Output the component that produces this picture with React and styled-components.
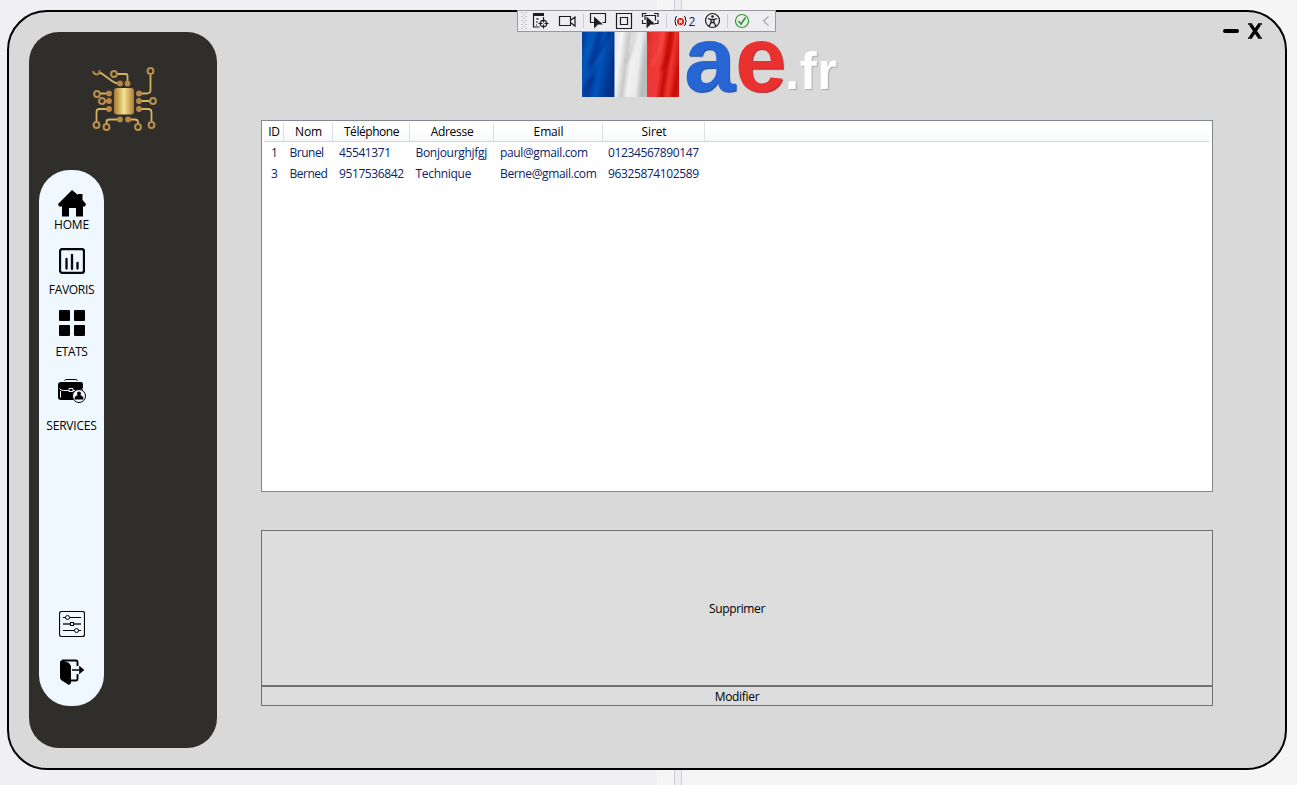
import React from "react";
import styled, { createGlobalStyle } from "styled-components";

const Global = createGlobalStyle`
  * { box-sizing: border-box; }
  body { margin: 0; overflow: hidden; font-family: "Open Sans", "Noto Sans", sans-serif; font-size: 12px; color: #000; }
  svg { display: block; flex: none; }
`;

const Desktop = styled.div`
  height: 785px;
  padding: 10px 10px 15px 7px;
  background: linear-gradient(90deg, #f0f0f4 657px, #f5f5f5 657px 674px, #ccccdb 674px 675px, #eeeef2 675px 681px, #ccccdb 681px 682px, #f5f5f5 682px);
`;

const Window = styled.div`
  position: relative;
  display: flex;
  height: 760px;
  padding: 20px 72px 20px 20px;
  border: 2px solid #000;
  border-radius: 40px;
  background: #d9d9d9;
`;

const Sidebar = styled.aside`
  display: flex;
  flex-direction: column;
  width: 188px;
  height: 716px;
  padding: 33px 0 0 10px;
  border-radius: 30px;
  background: #302e2b;
`;

const ChipLogo = styled.svg`
  width: 68px;
  height: 68px;
  margin: 0 0 37px 52px;
`;

const Nav = styled.nav`
  display: flex;
  flex-direction: column;
  align-items: center;
  width: 65px;
  height: 536px;
  padding-bottom: 20px;
  border-radius: 31px;
  background: #f0f8ff;
`;

const NavItem = styled.div`
  display: flex;
  flex-direction: column;
  align-items: center;
  gap: ${(p) => p.$gap || 0}px;
  margin-top: ${(p) => p.$top || 0}px;
`;

const NavIcon = styled.div`
  padding-left: 1px;
`;

const Text = styled.span`
  font-size: 12px;
  line-height: 16px;
  white-space: nowrap;
  letter-spacing: ${(p) => p.$track || 0}px;
`;

const Spacer = styled.div`
  flex: 1;
`;

const Main = styled.main`
  display: flex;
  flex-direction: column;
  flex: 1;
  margin-left: 44px;
`;

const Brand = styled.header`
  display: flex;
  align-items: flex-start;
  height: 88px;
  padding-left: 321px;
`;

const Letter = styled.span`
  width: ${(p) => p.$width}px;
  margin-top: ${(p) => p.$top}px;
  margin-left: ${(p) => p.$left || 0}px;
  font: 700 ${(p) => p.$size}px/1.15 "Liberation Sans", Arial, sans-serif;
  white-space: nowrap;
  letter-spacing: ${(p) => p.$track || 0}px;
  color: ${(p) => p.$color};
  text-shadow: 1px 1px 1px ${(p) => p.$shade};
`;

const DataGrid = styled.section`
  height: 372px;
  padding: 1px 3px 0 2px;
  border: 1px solid #828790;
  background: #fff;
`;

const GridRow = styled.div`
  display: grid;
  grid-template-columns: 20px 49px 77px 84px 109px 102px;
  height: 21px;
  color: #0a246a;
`;

const HeadRow = styled(GridRow)`
  height: 20px;
  color: #000;
  border-bottom: 1px solid #d5d5d5;
  background: linear-gradient(#fff 40%, #f7f8fa);
`;

const HeadCell = styled.div`
  display: flex;
  align-items: center;
  justify-content: center;
  padding-left: 1px;
  border-right: 1px solid #dfe0e3;
`;

const Cell = styled.div`
  display: flex;
  align-items: center;
  padding-left: ${(p) => p.$pad}px;
`;

const Actions = styled.div`
  display: flex;
  flex-direction: column;
  margin-top: 38px;
`;

const ActionButton = styled.button`
  display: flex;
  align-items: center;
  justify-content: center;
  height: ${(p) => p.$height}px;
  padding: 2px 0 0;
  border: 1px solid #707070;
  background: #ddd;
  color: #000;
  font-family: inherit;
`;

const WindowControls = styled.div`
  position: absolute;
  top: 9px;
  right: 22px;
`;

const DebugBar = styled.div`
  position: absolute;
  top: 10px;
  left: 517px;
  display: flex;
  align-items: center;
  width: 259px;
  height: 22px;
  border: 1px solid #999;
  background: #eeeef2;
`;

const columns = [
  { name: "ID", track: -0.3, pad: 7, cellTrack: -0.3 },
  { name: "Nom", track: -0.2, pad: 5.5, cellTrack: -0.5 },
  { name: "Téléphone", track: -0.45, pad: 6, cellTrack: -0.4 },
  { name: "Adresse", track: -0.3, pad: 5.5, cellTrack: -0.3 },
  { name: "Email", track: -0.15, pad: 6, cellTrack: -0.36 },
  { name: "Siret", track: -0.1, pad: 5, cellTrack: -0.38 },
];

const rows = [
  ["1", "Brunel", "45541371", "Bonjourghjfgj", "paul@gmail.com", "01234567890147"],
  ["3", "Berned", "9517536842", "Technique", "Berne@gmail.com", "96325874102589"],
];

const rings = [[23, 9], [59.5, 6], [6, 29], [11, 36], [5.5, 60], [15.5, 62], [47, 62], [60.5, 60], [62, 36]];
const dots = [[29, 18.5], [36.5, 18.5], [18, 28.5], [18, 36], [18, 44], [29, 54.5], [37, 54.5], [48, 28.5], [48, 36], [48, 44]];

function Chip() {
  return (
    <ChipLogo viewBox="0 0 68 68" fill="none">
      <defs>
        <linearGradient id="gold">
          <stop offset="0" stopColor="#a87832" />
          <stop offset=".5" stopColor="#f4e58f" />
          <stop offset="1" stopColor="#b07b35" />
        </linearGradient>
      </defs>
      <path
        d="m7 9 3-1 11 8q3 2.500 8 2.500M26 9h9q1.500 0 1.500 2v8M59.500 9v16q0 3.500-4 3.500H48M9 28.500h9M14 36h4M5.500 57V47q0-3 3-3H18M15.500 60v-3q0-2.500 3-2.500H29M37 54.500h7q3 0 3 2.500v3M48 44h9q3.500 0 3.500 3.500v10M48 36h11"
        stroke="#d3b264"
        strokeWidth="1.800"
      />
      <path d="M2 6q.5 3 3.500 3.500Q9 9 8.500 5" stroke="#b28643" strokeWidth="1.800" />
      {rings.map(([x, y]) => (
        <circle key={`${x}-${y}`} cx={x} cy={y} r="2.9" fill="#302e2b" stroke="#b98f49" strokeWidth="2" />
      ))}
      {dots.map(([x, y]) => (
        <circle key={`${x}-${y}`} cx={x} cy={y} r="2.9" fill="#b98646" />
      ))}
      <rect x="23" y="23" width="20" height="26.500" rx="3" fill="url(#gold)" />
    </ChipLogo>
  );
}

function HomeIcon() {
  return (
    <svg width="28" height="27" viewBox="0 0 28 27">
      <path d="M14 0 20 5V4h4.500v6l3.500 4-1 2.500H25v10h-7V18h-7v8.500H4v-10H1L0 14Z" />
    </svg>
  );
}

function StatsIcon() {
  return (
    <svg width="26" height="26" viewBox="0 0 26 26" fill="none" stroke="#000512">
      <rect x="1" y="1" width="24" height="24" rx="2.500" strokeWidth="2.300" />
      <path d="M7.500 11v9.500M13 7v14M18.500 15v5.500" strokeWidth="2.300" strokeLinecap="round" />
    </svg>
  );
}

function TilesIcon() {
  return (
    <svg width="26" height="26" viewBox="0 0 26 26">
      {[[0, 0], [15, 0], [0, 15], [15, 15]].map(([x, y]) => (
        <rect key={`${x}-${y}`} x={x} y={y} width="11" height="11" rx="1" />
      ))}
    </svg>
  );
}

function ServicesIcon() {
  return (
    <svg width="28" height="26" viewBox="0 0 28 26" fill="none" stroke="#f0f8ff">
      <path d="M6.500 2.500 8 1.500h10l1.500 1" stroke="#000" />
      <path d="M3 4h20q2 0 2 3v9H17v6H3q-3 0-3-3V7q0-3 3-3Z" fill="#000" stroke="none" />
      <path d="M1.500 10.500q1 2 4 2H11M15 12.500h5q4 0 5-2M11 10.500h4v3h-4zM2.500 13v6.500" />
      <circle cx="21" cy="18" r="6.500" fill="#f0f8ff" stroke="#000" />
      <circle cx="21" cy="15.500" r="2" fill="#000" stroke="none" />
      <path d="M16.500 21.500q0-4.500 4.500-4.500t4.500 4.500Z" fill="#000" stroke="none" />
    </svg>
  );
}

function SlidersIcon() {
  return (
    <svg width="26" height="26" viewBox="0 0 26 26" fill="none" stroke="#000">
      <rect x=".5" y=".5" width="25" height="25" rx="2" strokeWidth="1.200" />
      <path d="M4 6.500h18M4 19.500h18" />
      <path d="M4 13h18" stroke="#555" strokeWidth="2" />
      <g fill="#f0f8ff">
        <circle cx="8.500" cy="6.500" r="2" />
        <rect x="11.500" y="11.500" width="3" height="3" />
        <circle cx="17.500" cy="19.500" r="2" />
      </g>
    </svg>
  );
}

function ExitIcon() {
  return (
    <svg width="26" height="27" viewBox="0 0 26 27">
      <path d="M1 2.500 3 1 10 4l2 3v17l-2 2-8-5-1-2Z" />
      <path d="M3 1.500h14q1.500 0 1.500 2V7M18.500 15v5q0 1.500-1.500 1.500h-5" fill="none" stroke="#000" strokeWidth="1.900" />
      <path d="M13 11h7M21 8.500l3 2.500-3 2.500Z" stroke="#000" strokeWidth="1.700" />
    </svg>
  );
}

function FlagArt() {
  return (
    <svg width="97" height="65" viewBox="0 0 97 65">
      <defs>
        <linearGradient id="blueFold" x2="1" y2=".35">
          <stop offset="0" stopColor="#003b9c" /><stop offset=".25" stopColor="#0057b8" />
          <stop offset=".45" stopColor="#003a9c" /><stop offset=".65" stopColor="#0054b8" />
          <stop offset="1" stopColor="#00328b" />
        </linearGradient>
        <linearGradient id="whiteFold" x2="1" y2=".25">
          <stop offset="0" stopColor="#e8e8e8" /><stop offset=".22" stopColor="#f5f5f5" />
          <stop offset=".43" stopColor="#c9c9c9" /><stop offset=".58" stopColor="#f1f1f1" />
          <stop offset=".8" stopColor="#ececec" /><stop offset="1" stopColor="#bcbcbc" />
        </linearGradient>
        <linearGradient id="redFold" x2="1" y2=".28">
          <stop offset="0" stopColor="#db2523" /><stop offset=".22" stopColor="#f03633" />
          <stop offset=".5" stopColor="#ed3b3a" /><stop offset=".68" stopColor="#c70c05" />
          <stop offset=".83" stopColor="#ee3633" /><stop offset="1" stopColor="#d31914" />
        </linearGradient>
        <filter id="soft" x="-.1" width="1.2"><feGaussianBlur stdDeviation="1.5" /></filter>
      </defs>
      <rect width="33" height="65" fill="url(#blueFold)" />
      <rect x="32.500" width="33" height="65" fill="url(#whiteFold)" />
      <rect x="65" width="32" height="65" fill="url(#redFold)" />
      <g filter="url(#soft)" fill="none" strokeWidth="3">
        <path d="M15-3Q9 15 0 29M24 4Q20 25 5 46" stroke="#0068c6" opacity=".55" />
        <path d="M28-3Q22 17 7 33M2 62Q5 52 12 45" stroke="#001f7d" opacity=".55" />
        <path d="M53-2Q53 18 43 31M59 65Q60 35 64 10" stroke="#b8b8b8" opacity=".5" />
        <path d="M90-3Q91 21 79 39M97 34Q96 50 91 65" stroke="#b90702" opacity=".6" />
        <path d="M81-3Q80 20 70 33" stroke="#ff5550" opacity=".5" />
      </g>
    </svg>
  );
}

function DebugIcons() {
  return (
    <svg width="257" height="20" viewBox="518 11 257 20" fill="none" stroke="#1e1e1e" strokeWidth="1.200">
      <path d="M522 12v18M526 12v18" stroke="#999" strokeWidth="1" strokeDasharray="1 3" />
      <path d="M524 14v16" stroke="#999" strokeWidth="1" strokeDasharray="1 3" />
      <path d="M533 14.500h11" strokeWidth="3" />
      <path d="M533.500 14v13h6M536 19h3M536 22h2M536 25h1M543.500 17v2" />
      <circle cx="543.500" cy="23.500" r="3.200" />
      <path d="M543.500 18.500v4M543.500 24.500v4M538.500 23.500h4M544.500 23.500h4" />
      <path d="M559.500 16.500h11v9h-11ZM571 20l4-3v9l-4-3" />
      <path d="M583.500 14v14M666.500 14v14M727.500 14v14" stroke="#ccccdb" strokeWidth="1" />
      <path d="M594 22.500h-3.500v-9h15v9h-3" />
      <path d="m594 16.500 9 8h-5l-4 4Z" fill="#1e1e1e" stroke="none" />
      <path d="M616.500 13.500h15v15h-15ZM620.500 17.500h7v7h-7Z" />
      <path d="M642.500 17v-3.500h4M654 13.500h4V17M642.500 20v3.500h3.500M658 20v3.500h-3M645 20v-4.500h10.500v5" />
      <path d="m646.500 16.500 9 8h-5l-4 4Z" fill="#1e1e1e" stroke="none" />
      <path d="M677 16.500q-1.500 0-1.500 1.500v2l-1 1 1 1v2q0 1.500 1.500 1.500M684 16.500q1.500 0 1.500 1.500v2l1 1-1 1v2q0 1.500-1.500 1.500" strokeWidth="1" />
      <circle cx="680.500" cy="21.500" r="3.500" fill="#e51400" stroke="none" />
      <path d="m679 20 3 3m0-3-3 3" stroke="#fff" />
      <text x="688.500" y="25.500" fontSize="12" fontFamily="Open Sans, sans-serif" fill="#1e1e1e" stroke="none">2</text>
      <circle cx="712.500" cy="20.500" r="7" />
      <circle cx="712.500" cy="16.500" r="1.300" fill="#1e1e1e" stroke="none" />
      <path d="m708 18.500 3 1h3l3-1M711 19.500v3l-2 4M714 19.500v3l2 4M711 22.500h3" strokeWidth="1.300" />
      <circle cx="742" cy="21" r="6.500" stroke="#339933" />
      <path d="m738.500 21 2.500 3 4.500-6.500" stroke="#339933" strokeWidth="1.700" />
      <path d="m768.500 16.500-5 4.500 5 4.500" stroke="#aaa" />
    </svg>
  );
}

export default function App() {
  return (
    <>
      <Global />
      <Desktop>
        <Window>
          <Sidebar>
            <Chip />
            <Nav>
              <NavItem $top={20}><HomeIcon /><Text $track={-0.2}>HOME</Text></NavItem>
              <NavItem $top={15} $gap={8}><NavIcon><StatsIcon /></NavIcon><Text $track={-0.3}>FAVORIS</Text></NavItem>
              <NavItem $top={12} $gap={8}><TilesIcon /><Text $track={-0.4}>ETATS</Text></NavItem>
              <NavItem $top={18} $gap={14}><NavIcon><ServicesIcon /></NavIcon><Text $track={-0.2}>SERVICES</Text></NavItem>
              <Spacer />
              <NavItem><SlidersIcon /></NavItem>
              <NavItem $top={22}><ExitIcon /></NavItem>
            </Nav>
          </Sidebar>
          <Main>
            <Brand>
              <FlagArt />
              <Letter $left={5} $width={50} $top={-25} $size={92} $color="#2765d4" $shade="#174b9c">a</Letter>
              <Letter $left={1} $width={50} $top={-25} $size={92} $color="#e93130" $shade="#a92828">e</Letter>
              <Letter $width={56} $top={11} $size={51} $track={0.6} $color="#fff" $shade="#aaa">.fr</Letter>
            </Brand>
            <DataGrid>
              <HeadRow>
                {columns.map((c) => (
                  <HeadCell key={c.name}><Text $track={c.track}>{c.name}</Text></HeadCell>
                ))}
              </HeadRow>
              {rows.map((r) => (
                <GridRow key={r[0]}>
                  {r.map((value, i) => (
                    <Cell key={value} $pad={columns[i].pad}>
                      <Text $track={columns[i].cellTrack}>{value}</Text>
                    </Cell>
                  ))}
                </GridRow>
              ))}
            </DataGrid>
            <Actions>
              <ActionButton $height={156}><Text $track={-0.35}>Supprimer</Text></ActionButton>
              <ActionButton $height={20}><Text $track={-0.3}>Modifier</Text></ActionButton>
            </Actions>
          </Main>
          <WindowControls>
            <svg width="42" height="22" viewBox="0 0 42 22" fill="none" stroke="#000">
              <path d="M4 10h12" strokeWidth="4" strokeLinecap="round" />
              <path d="m29.500 3.500 9 13M38.500 3.500l-9 13" strokeWidth="3.200" />
              <path d="M27 3h4M37 3h4M27 17h4M37 17h4" strokeWidth="1.500" />
            </svg>
          </WindowControls>
        </Window>
      </Desktop>
      <DebugBar><DebugIcons /></DebugBar>
    </>
  );
}
